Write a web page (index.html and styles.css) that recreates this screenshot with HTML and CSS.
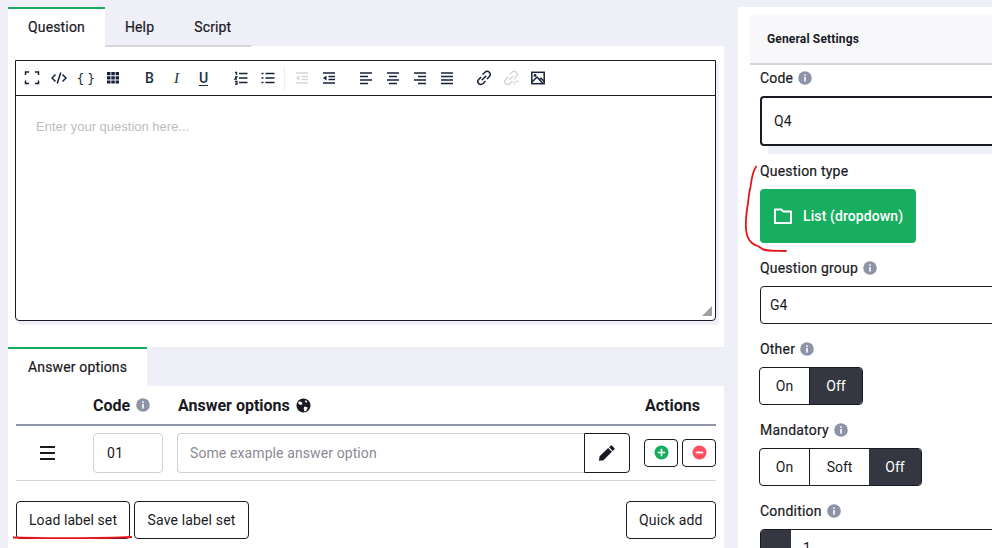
FILE: index.html
```html
<!doctype html>
<html>
<head>
<meta charset="utf-8">
<title>Question editor</title>
<link rel="stylesheet" href="styles.css">
</head>
<body>
<svg width="0" height="0" class="defs">
	<symbol id="info" viewBox="0 0 14 14"><circle cx="7" cy="7" r="6.8" fill="#8f93a8"/><rect x="6.2" y="6" width="1.6" height="4.6" fill="#fff"/><rect x="6.2" y="3.4" width="1.6" height="1.6" fill="#fff"/></symbol>
</svg>

<div class="page">

<div class="left">
	<div class="tabs">
		<a class="tab active">Question</a>
		<a class="tab">Help</a>
		<a class="tab">Script</a>
	</div>
	<div class="panel_top">
		<div class="editor">
			<div class="toolbar">
				<div class="group">
					<span class="tool"><svg width="16" height="16" viewBox="0 0 16 16" class="ic"><path d="M1.500 5V2h3.500M11 2h3.500v3M14.500 10.500V13.500H11M5 13.500H1.500v-3"/></svg></span>
					<span class="tool"><svg width="16" height="16" viewBox="0 0 16 16" class="ic"><path d="M4.500 4.500 1 8l3.500 3.500M11.500 4.500 15 8l-3.500 3.500M9.800 2.500 6.200 13.500"/></svg></span>
					<span class="tool tool_text mono">{ }</span>
					<span class="tool"><svg width="16" height="16" viewBox="0 0 16 16"><path fill="#16223a" d="M2 2h3.500v3.200H2zM6.300 2h3.500v3.200H6.300zM10.600 2H14v3.200h-3.400zM2 6.200h3.500v3.200H2zM6.300 6.200h3.500v3.200H6.300zM10.600 6.200H14v3.200h-3.400zM2 10.400h3.500v3.200H2zM6.300 10.400h3.500v3.200H6.300zM10.600 10.400H14v3.200h-3.400z"/></svg></span>
				</div>
				<div class="group">
					<span class="tool tool_text">B</span>
					<span class="tool tool_text serif">I</span>
					<span class="tool tool_text under">U</span>
				</div>
				<div class="group sep">
					<span class="tool"><svg width="16" height="16" viewBox="0 0 16 16" class="ic thin"><path d="M6 3.500h8.500M6 8h8.500M6 12.500h8.500M2 2.500h1.500v2.500M2 7h1.800L2 9.200h2M2 11.500h2v2.500H2"/></svg></span>
					<span class="tool"><svg width="16" height="16" viewBox="0 0 16 16" class="ic thin"><path d="M5.500 3.500h9M5.500 8h9M5.500 12.500h9M1.500 3.500h2M1.500 8h2M1.500 12.500h2"/></svg></span>
				</div>
				<div class="group">
					<span class="tool"><svg width="16" height="16" viewBox="0 0 16 16" class="ic thin off"><path d="M2 3h12M7.500 6.500H14M7.500 9.500H14M2 13h12"/><path class="solid" d="M5.500 5.500v5L2 8z"/></svg></span>
					<span class="tool"><svg width="16" height="16" viewBox="0 0 16 16" class="ic thin"><path d="M2 3h12M7.500 6.500H14M7.500 9.500H14M2 13h12"/><path class="solid" d="M5.500 5.500v5L2 8z"/></svg></span>
				</div>
				<div class="group">
					<span class="tool"><svg width="16" height="16" viewBox="0 0 16 16" class="ic thin"><path d="M2 3h12M2 6.500h8M2 10h12M2 13.500h8"/></svg></span>
					<span class="tool"><svg width="16" height="16" viewBox="0 0 16 16" class="ic thin"><path d="M2 3h12M4 6.500h8M2 10h12M4 13.500h8"/></svg></span>
					<span class="tool"><svg width="16" height="16" viewBox="0 0 16 16" class="ic thin"><path d="M2 3h12M6 6.500h8M2 10h12M6 13.500h8"/></svg></span>
					<span class="tool"><svg width="16" height="16" viewBox="0 0 16 16" class="ic thin"><path d="M2 3h12M2 6.500h12M2 10h12M2 13.500h12"/></svg></span>
				</div>
				<div class="group">
					<span class="tool"><svg width="16" height="16" viewBox="0 0 16 16" class="ic"><path d="M6.500 4.500 9 2.300a3 3 0 0 1 4.400 4.200L11 9M5 7 2.700 9.400a3 3 0 0 0 4.300 4.200L9.500 11M5.800 10.200l4.400-4.400"/></svg></span>
					<span class="tool"><svg width="16" height="16" viewBox="0 0 16 16" class="ic off"><path d="M6.500 4.500 9 2.300a3 3 0 0 1 4.400 4.200L11 9M5 7 2.700 9.400a3 3 0 0 0 4.300 4.200L9.500 11M5.800 10.200l4.400-4.400M11.500 11.500v3M13 11.500h2.500"/></svg></span>
					<span class="tool"><svg width="16" height="16" viewBox="0 0 16 16" class="ic"><rect x="1.800" y="2.300" width="12.400" height="11.400"/><path d="M2 12 7 7l6 6.500M9.500 9.500l1.500-1.300 3 3"/><circle cx="5" cy="5.400" r=".7"/></svg></span>
				</div>
			</div>
			<div class="edit_area">
				<p class="ph">Enter your question here...</p>
				<i class="grip"></i>
			</div>
		</div>
	</div>

	<div class="tabs tabs2">
		<a class="tab active">Answer options</a>
	</div>
	<div class="panel_bottom">
		<div class="grid head">
			<span></span>
			<span class="th">Code <svg width="14" height="14" class="info"><use href="#info"/></svg></span>
			<span class="th th_ans">Answer options
				<svg width="15" height="15" viewBox="0 0 16 16" class="globe"><circle cx="8" cy="8" r="7.500" fill="#1a1a24"/><path fill="#fff" d="M4 3.500 7 5 6 7.500 3.500 7 2 5zM9 9l3.500 1L11 13.500 9 14.500 8.200 11zM10 2.500l2 1-1 1.500-1.500-1z"/></svg>
			</span>
			<span class="th th_actions">Actions</span>
		</div>
		<div class="grid row">
			<div class="drag"><i></i><i></i><i></i></div>
			<div class="inp code_inp">01</div>
			<div class="ans">
				<div class="inp ans_inp">Some example answer option</div>
				<a class="pen"><svg width="18" height="18" viewBox="0 0 18 18"><path fill="#1a1a24" d="M12.600 1.700a1 1 0 0 1 1.400 0l2.300 2.300a1 1 0 0 1 0 1.400l-1.500 1.500-3.700-3.700zM10.200 4.100l3.700 3.700-8.400 8.400-4 .6a.4.400 0 0 1-.5-.5l.6-4z"/></svg></a>
			</div>
			<div class="actions">
				<a class="act"><svg width="15" height="15" viewBox="0 0 15 15"><circle cx="7.500" cy="7.500" r="7" fill="#17ad5f"/><path d="M7.500 3.800v7.400M3.800 7.500h7.400" stroke="#fff" stroke-width="1.600"/></svg></a>
				<a class="act"><svg width="15" height="15" viewBox="0 0 15 15"><circle cx="7.500" cy="7.500" r="7" fill="#ff5060"/><path d="M3.800 7.500h7.400" stroke="#fff" stroke-width="1.800"/></svg></a>
			</div>
		</div>
		<div class="btn_row">
			<a class="btn">Load label set</a>
			<a class="btn btn_wide">Save label set</a>
			<a class="btn btn_wide quick">Quick add</a>
		</div>
	</div>
</div>

<div class="right">
	<div class="right_head">General Settings</div>
	<div class="form">
		<label class="lbl">Code <svg width="14" height="14" class="info"><use href="#info"/></svg></label>
		<div class="field field_focus">Q4</div>

		<label class="lbl">Question type</label>
		<a class="type_btn">
			<svg width="20" height="20" viewBox="0 0 20 20" fill="none" stroke="#fff" stroke-width="2" stroke-linejoin="round"><path d="M2 3.500h6.500l1.600 2H18V17H2z"/></svg>
			List (dropdown)
		</a>

		<label class="lbl">Question group <svg width="14" height="14" class="info"><use href="#info"/></svg></label>
		<div class="field field_select">G4</div>

		<label class="lbl">Other <svg width="14" height="14" class="info"><use href="#info"/></svg></label>
		<div class="toggle">
			<span class="seg seg_on">On</span>
			<span class="seg seg_off cur">Off</span>
		</div>

		<label class="lbl">Mandatory <svg width="14" height="14" class="info"><use href="#info"/></svg></label>
		<div class="toggle">
			<span class="seg seg_on">On</span>
			<span class="seg seg_soft">Soft</span>
			<span class="seg seg_off cur">Off</span>
		</div>

		<label class="lbl">Condition <svg width="14" height="14" class="info"><use href="#info"/></svg></label>
		<div class="cond"><span class="cond_add"></span><span class="cond_val">1</span></div>
	</div>
</div>

<svg class="marks" width="992" height="548" viewBox="0 0 992 548" fill="none" stroke="#e8141c" stroke-width="1.800">
	<path d="M756.500 166C752 172 751.500 180 750.500 187 749 193 748.500 198 748 203 746.500 212 745.500 222 746 229 746.500 236 748 240 752 243 755 245.500 759 246 761 248 763 251 770 250.500 786.500 251"/>
	<path d="M13 537.500C40 538.500 100 538.500 132 537"/>
</svg>

</div>
</body>
</html>
```

FILE: styles.css
```css
*{box-sizing:border-box;}
body{margin:0;background-color:#eeeff7;font-family:"Roboto","Liberation Sans",sans-serif;font-size:14px;color:#1a1a24;}
a{display:block;text-decoration:none;color:#1a1a24;}
.defs{position:absolute;}

.page{position:relative;display:flex;width:992px;height:548px;overflow:hidden;padding-top:7px;}
.marks{position:absolute;left:0;top:0;pointer-events:none;}

/* left column */
.left{flex:none;width:716px;margin-left:8px;margin-right:14px;}
.tabs{display:flex;height:40px;margin-bottom:-1px;position:relative;}
.tab{padding:0 20px;line-height:37px;border-bottom:2px solid #d5d5da;border-top:2px solid transparent;letter-spacing:.15px;-webkit-text-stroke:.2px #1a1a24;}
.tab.active{background-color:#fff;border-top-color:#17ad5f;border-bottom-color:#fff;}
.tabs2{height:39px;margin-bottom:0;}
.tabs2 .tab{border-bottom:none;line-height:37px;}

.panel_top{background-color:#fff;height:301px;padding:14px 0 0 7px;}
.editor{width:701px;height:261px;background-color:#fff;border:1px solid #1a1a24;border-radius:0 0 4px 4px;box-shadow:3px 4px 0 #eeeff7;display:flex;flex-direction:column;}
.toolbar{display:flex;height:35px;border-bottom:1px solid #1a1a24;padding-left:2px;align-items:center;}
.group{display:flex;margin-right:10px;}
.group.sep{margin-right:3px;padding-right:3px;border-right:1px solid #eeeef0;}
.tool{width:27px;height:24px;display:flex;align-items:center;justify-content:center;}
.tool_text{font-size:14px;font-weight:500;color:#222f3e;}
.mono{font-family:"DejaVu Sans Mono",monospace;font-size:13px;font-weight:400;letter-spacing:-2.5px;padding-right:2px;}
.serif{font-family:"Liberation Serif",serif;font-style:italic;font-size:15px;}
.under{text-decoration:underline;text-underline-offset:2px;}
.ic{fill:none;stroke:#16223a;stroke-width:1.500;}
.ic.thin{stroke-width:1.300;}
.ic .solid{fill:#16223a;stroke:none;}
.ic.off{stroke:#d3d6dc;}
.ic.off .solid{fill:#d3d6dc;}

.edit_area{flex:1;position:relative;padding:21px 20px;}
.ph{margin:0;font-family:"Liberation Sans",sans-serif;font-size:13px;line-height:20px;color:#bdbdbd;}
.grip{position:absolute;right:3px;bottom:4px;width:10px;height:10px;background-color:#a0a0a0;clip-path:polygon(100% 0,100% 100%,0 100%);}

.panel_bottom{background-color:#fff;height:170px;padding:0 8px;}
.grid{display:grid;grid-template-columns:63px 70px 453px 72px;column-gap:14px;}
.head{height:40px;border-bottom:2px solid #9094a8;align-items:center;}
.th{font-size:16px;font-weight:700;display:flex;align-items:center;gap:6px;}
.th_ans{padding-left:1px;}
.th_actions{padding-left:1px;}
.info{flex:none;}
.row{height:55px;border-bottom:1px solid #d5d5da;padding-top:7px;}
.drag{display:flex;flex-direction:column;gap:4px;padding:13px 0 0 24px;}
.drag i{display:block;width:15px;height:2px;background-color:#1a1a24;}
.inp{height:40px;border:1px solid #cfcfd4;border-radius:4px;line-height:38px;padding-left:13px;background-color:#fff;letter-spacing:.5px;}
.ans{display:flex;}
.ans_inp{flex:1;border-right:none;border-radius:4px 0 0 4px;padding-left:12px;color:#8b8b95;letter-spacing:.1px;}
.pen{width:46px;height:40px;border:1px solid #1a1a24;border-radius:0 4px 4px 0;display:flex;align-items:center;justify-content:center;}
.actions{display:flex;gap:4px;padding-top:6px;}
.act{width:34px;height:28px;border:1px solid #1a1a24;border-radius:4px;display:flex;align-items:center;justify-content:center;padding-bottom:1px;}
.btn_row{display:flex;gap:4px;margin-top:20px;}
.btn{height:38px;line-height:36px;padding:0 12px;border:1px solid #1a1a24;border-radius:4px;letter-spacing:.08px;}
.btn_wide{padding:0 12.500px;letter-spacing:.15px;}
.quick{margin-left:auto;}

/* right column */
.right{flex:none;width:300px;background-color:#fff;padding:8px 0 0 12px;}
.right_head{height:50px;background-color:#f8f8fb;border-bottom:2px solid #d5d5da;padding-left:17px;line-height:48px;font-size:12px;font-weight:700;letter-spacing:.15px;}
.form{padding:3px 0 0 10px;}
.lbl{display:flex;align-items:center;gap:5px;height:20px;margin-bottom:8px;letter-spacing:.2px;-webkit-text-stroke:.2px #1a1a24;}
.field{border:1px solid #1a1a24;border-radius:4px;height:38px;line-height:36px;padding-left:9px;margin-bottom:15px;}
.field_focus{height:50px;line-height:46px;border-width:2px;padding-left:12px;box-shadow:0 16px 0 -8px #eeeff7;}
.type_btn{width:156px;height:54px;background-color:#18ae5f;border-radius:4px;color:#fff;font-weight:500;letter-spacing:.1px;display:flex;align-items:center;gap:10px;padding-left:13px;margin-bottom:15px;}
.toggle{display:flex;width:max-content;height:38px;margin:0 0 15px -1px;border:1px solid #1a1a24;border-radius:4px;overflow:hidden;}
.seg{display:block;line-height:36px;text-align:center;}
.seg_on{width:50px;border-right:1px solid #1a1a24;}
.seg_soft{width:59px;}
.seg_off{width:52px;}
.cur{background-color:#343741;color:#fff;}
.cond{display:flex;height:38px;border:1px solid #1a1a24;border-radius:4px;overflow:hidden;}
.cond_add{width:30px;background-color:#343741;}
.cond_val{padding-left:12px;line-height:36px;}
```
